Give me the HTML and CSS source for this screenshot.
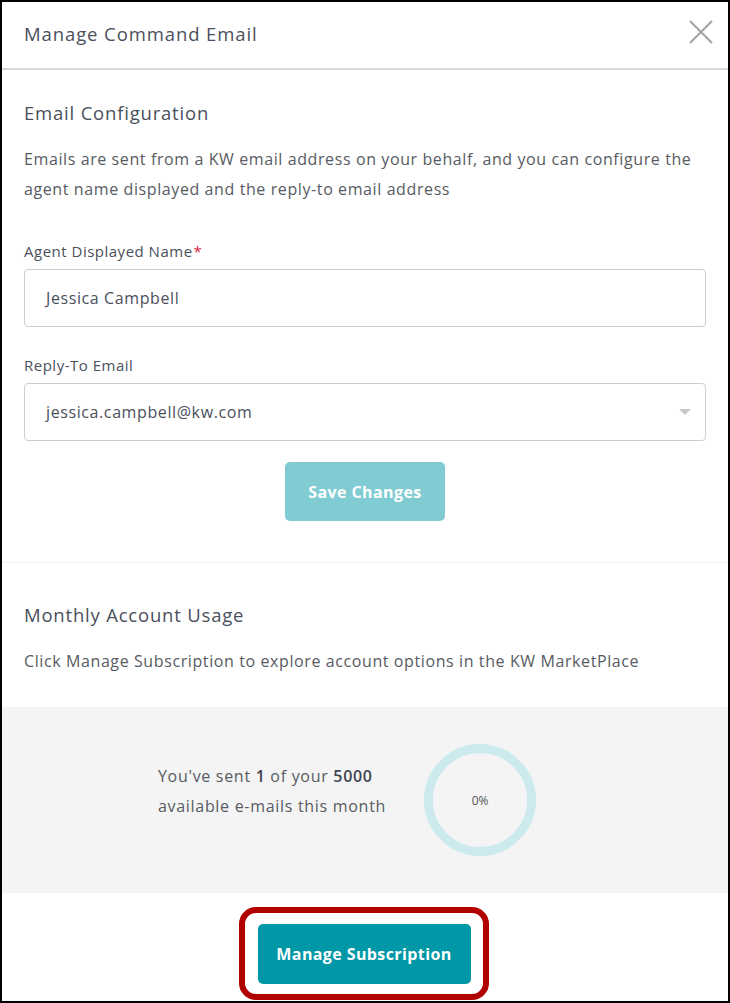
FILE: index.html
```html
<!DOCTYPE html>
<html>
<head>
<meta charset="utf-8">
<link rel="stylesheet" href="styles.css">
</head>
<body>
<div class="frame">
  <header class="header">
    <h1 class="title">Manage Command Email</h1>
    <svg class="close" width="26" height="26" viewBox="0 0 26 26"><path d="M2 2 L24 24 M24 2 L2 24" stroke="#a3a6ab" stroke-width="2.2" fill="none"/></svg>
  </header>
  <section class="config">
    <h2 class="section-title">Email Configuration</h2>
    <p class="desc">Emails are sent from a KW email address on your behalf, and you can configure the agent name displayed and the reply-to email address</p>
    <label class="label first">Agent Displayed Name<span class="req">*</span></label>
    <div class="field">Jessica Campbell</div>
    <label class="label">Reply-To Email</label>
    <div class="field select">jessica.campbell@kw.com<span class="caret"></span></div>
    <div class="btn-row"><button class="btn btn-light">Save Changes</button></div>
  </section>
  <section class="usage">
    <h2 class="section-title">Monthly Account Usage</h2>
    <p class="desc">Click Manage Subscription to explore account options in the KW MarketPlace</p>
  </section>
  <div class="band">
    <p class="sent">You've sent <b>1</b> of your <b>5000</b><br>available e-mails this month</p>
    <div class="ring"><span>0%</span></div>
  </div>
  <div class="footer">
    <div class="highlight"><button class="btn btn-dark">Manage Subscription</button></div>
  </div>
</div>
</body>
</html>
```
FILE: styles.css
```css
* { box-sizing: border-box; }
html, body { margin: 0; padding: 0; background: #fff; }
body { font-family: "Open Sans", "Lato", sans-serif; color: #4a4f5c; }
.frame {
  width: 730px; height: 1003px;
  border: 2px solid #000;
  background: #fff;
  display: flex; flex-direction: column;
  overflow: hidden;
}
.header {
  height: 68px;
  border-bottom: 2px solid #d6d9dc;
  display: flex; align-items: center; justify-content: space-between;
  padding: 0 14px 0 22px;
}
.title { margin: -4px 0 0; font-size: 18.5px; font-weight: 400; color: #4a4f5c; letter-spacing: 0.9px; }
.close { display: block; margin-top: -6px; }
.config { padding: 30px 22px 0 22px; border-bottom: 1px solid #f0f0f0; height: 493px; }
.section-title { margin: 0; font-size: 18.5px; font-weight: 400; color: #4a4f5c; line-height: 26px; letter-spacing: 0.8px; }
.desc { margin: 18px 0 0; font-size: 16px; line-height: 30px; color: #575b63; letter-spacing: 0.6px; }
.label { display: block; margin-top: 26px; font-size: 15px; color: #4a4f5c; line-height: 24px; letter-spacing: 0.5px; }
.label.first { margin-top: 35px; }
.req { color: #d8243c; margin-left: 1px; }
.field {
  margin-top: 6px; height: 58px;
  border: 1px solid #ccced1; border-radius: 4px;
  padding: 0 20px 0 21px; display: flex; align-items: center;
  font-size: 16px; color: #4a4f5c; letter-spacing: 0.6px;
}
.select { justify-content: space-between; }
.caret { width: 0; height: 0; border-left: 6px solid transparent; border-right: 6px solid transparent; border-top: 6px solid #c8c8c8; margin-right: -6px; }
.btn-row { display: flex; justify-content: center; margin-top: 21px; }
.btn {
  border: none; border-radius: 5px; color: #fff;
  font-family: inherit; font-weight: 700; font-size: 16px;
  height: 59px; letter-spacing: 0.4px;
}
.btn-light { background: #80ccd2; width: 160px; }
.usage { padding: 39px 22px 0; height: 144px; }
.usage .desc { margin-top: 18px; }
.band {
  background: #f4f4f4; height: 186px;
  display: flex; align-items: center; justify-content: center;
  gap: 38px; padding-right: 36px;
}
.sent { margin: 0 0 18px; font-size: 16px; line-height: 30px; color: #575b63; letter-spacing: 0.7px; }
.sent b { color: #3f4450; font-weight: 600; }
.ring {
  width: 112px; height: 112px; border-radius: 50%;
  border: 9px solid #cdeaee;
  display: flex; align-items: center; justify-content: center;
  font-size: 12px; color: #555;
}
.footer { flex: 1; display: flex; justify-content: center; padding-top: 14px; padding-right: 2px; }
.highlight {
  width: 250px; height: 93px;
  border: 6px solid #b00000; border-radius: 17px;
  display: flex; align-items: center; justify-content: center;
}
.btn-dark { background: #0097a7; width: 213px; height: 60px; }
```
